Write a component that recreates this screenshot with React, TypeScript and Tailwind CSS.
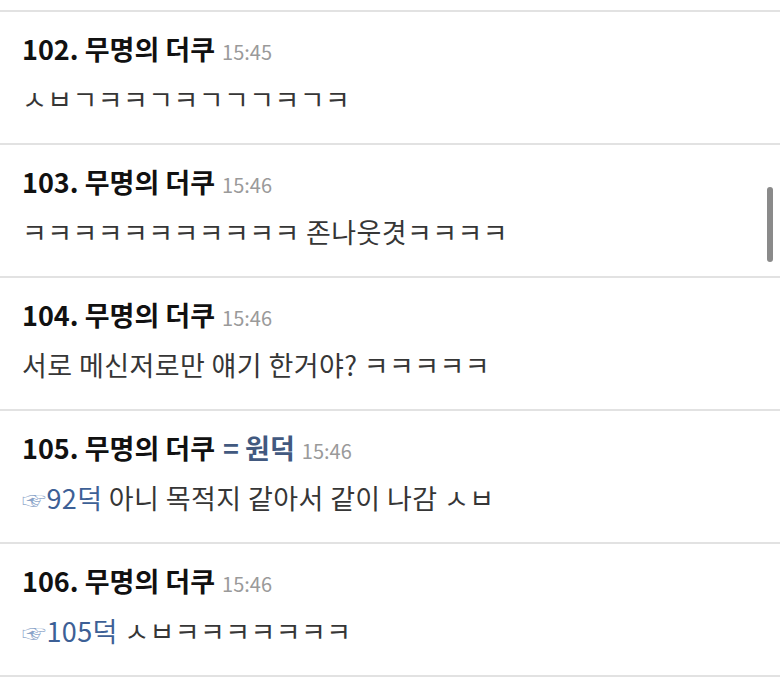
import React from "react";

type Post = {
  no: number;
  time: string;
  nick?: string;
  quote?: string;
  body: string;
};

const posts: Post[] = [
  { no: 102, time: "15:45", body: "ㅅㅂㄱㅋㅋㄱㅋㄱㄱㄱㅋㄱㅋ" },
  { no: 103, time: "15:46", body: "ㅋㅋㅋㅋㅋㅋㅋㅋㅋㅋㅋ 존나웃겻ㅋㅋㅋㅋ" },
  { no: 104, time: "15:46", body: "서로 메신저로만 얘기 한거야? ㅋㅋㅋㅋㅋ" },
  { no: 105, time: "15:46", nick: "원덕", quote: "92덕", body: " 아니 목적지 같아서 같이 나감 ㅅㅂ" },
  { no: 106, time: "15:46", quote: "105덕", body: " ㅅㅂㅋㅋㅋㅋㅋㅋㅋ" },
];

const font = { fontFamily: '"Noto Sans CJK KR", "Noto Sans", sans-serif' };

const Comment = ({ post }: { post: Post }) => (
  <div className="h-[133px] border-t-2 border-[#e2e2e2] px-[22px] pt-[20px]">
    <div className="flex items-baseline whitespace-nowrap leading-[34px]">
      <span className="text-[27px] font-bold text-[#111]">{post.no}. 무명의 더쿠</span>
      {post.nick && (
        <span className="ml-[8px] text-[27px] font-bold text-[#42597f]">= {post.nick}</span>
      )}
      <span className="ml-[7px] text-[20px] text-[#9a9a9a]">{post.time}</span>
    </div>
    <div className="mt-[12px] whitespace-nowrap text-[27px] leading-[36px] tracking-[0.4px] text-[#363636]">
      {post.quote && (
        <span className="text-[#3d6096]">
          <span className="text-[24px] text-[#8aa3c8]">☞</span>
          {post.quote}
        </span>
      )}
      {post.body}
    </div>
  </div>
);

export default function App() {
  return (
    <div className="relative h-[691px] w-[780px] overflow-hidden bg-white pt-[10px]" style={font}>
      {posts.map((p) => (
        <Comment key={p.no} post={p} />
      ))}
      <div className="border-t-2 border-[#e2e2e2]" />
      <div className="absolute left-[767px] top-[187px] h-[75px] w-[6px] rounded-full bg-[#8a8a8a]" />
    </div>
  );
}
